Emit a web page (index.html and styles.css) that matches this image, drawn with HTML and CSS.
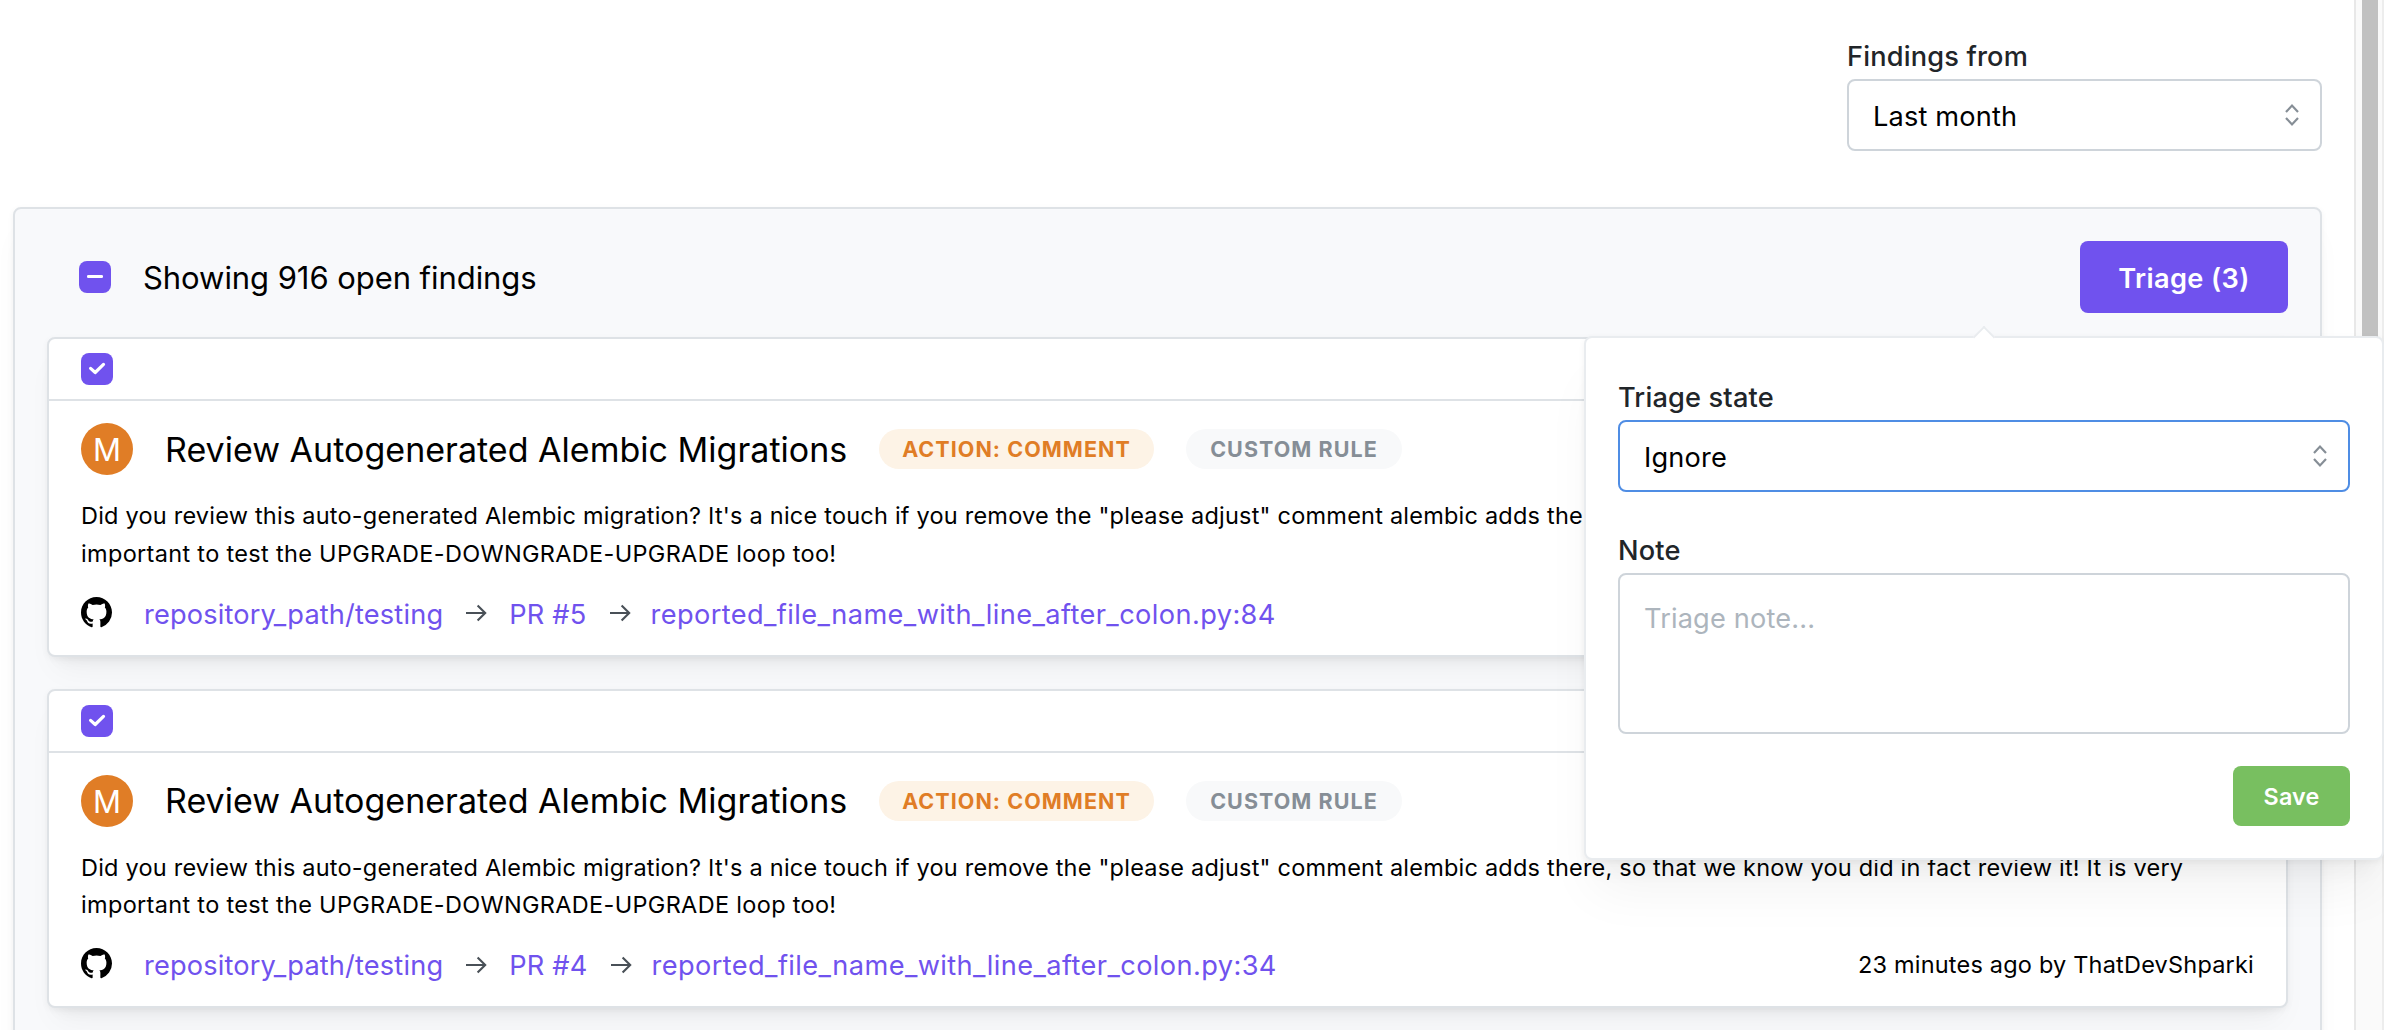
FILE: index.html
```
<!DOCTYPE html>
<html lang="en">
<head>
<meta charset="utf-8">
<title>Findings</title>
<link rel="stylesheet" href="styles.css">
</head>
<body>
<svg class="sprite" width="0" height="0">
  <symbol id="check" viewBox="0 0 32 32"><path d="M9.6 15.4 L14.2 19.5 L22.5 11.4" fill="none" stroke="#fff" stroke-width="3.2" stroke-linecap="round" stroke-linejoin="round"/></symbol>
  <symbol id="minus" viewBox="0 0 32 32"><rect x="8" y="14" width="16" height="3" rx="1.2" fill="#fff"/></symbol>
  <symbol id="arrow" viewBox="0 0 22 18"><path d="M1 9H20M12.6 1.4L20.2 9L12.6 16.6" fill="none" stroke="#495057" stroke-width="2.1"/></symbol>
  <symbol id="chevrons" viewBox="0 0 16 24"><path d="M2 9L8 2.6L14 9M2 15L8 21.4L14 15" fill="none" stroke="#868e96" stroke-width="2.2"/></symbol>
  <symbol id="github" viewBox="0 0 16 16"><path fill-rule="evenodd" d="M8 0C3.58 0 0 3.58 0 8c0 3.54 2.29 6.53 5.47 7.59.4.07.55-.17.55-.38 0-.19-.01-.82-.01-1.49-2.01.37-2.53-.49-2.69-.94-.09-.23-.48-.94-.82-1.13-.28-.15-.68-.52-.01-.53.63-.01 1.08.58 1.23.82.72 1.21 1.87.87 2.33.66.07-.52.28-.87.51-1.07-1.78-.2-3.64-.89-3.64-3.95 0-.87.31-1.59.82-2.15-.08-.2-.36-1.02.08-2.12 0 0 .67-.21 2.2.82.64-.18 1.32-.27 2-.27s1.36.09 2 .27c1.53-1.04 2.2-.82 2.2-.82.44 1.1.16 1.92.08 2.12.51.56.82 1.27.82 2.15 0 3.07-1.87 3.75-3.65 3.95.29.25.54.73.54 1.48 0 1.07-.01 1.93-.01 2.2 0 .21.15.46.55.38A8.01 8.01 0 0 0 16 8c0-4.42-3.58-8-8-8z"/></symbol>
</svg>
<div class="app">
  <main class="page">
    <div class="filters">
      <div class="field">
        <div class="label">Findings from</div>
        <div class="select"><span>Last month</span><svg class="chevrons"><use href="#chevrons"/></svg></div>
      </div>
    </div>
    <section class="panel">
      <header class="panel-head">
        <span class="checkbox"><svg><use href="#minus"/></svg></span>
        <span class="summary">Showing 916 open findings</span>
        <button class="triage">Triage (3)</button>
      </header>
      <article class="card">
        <div class="card-head"><span class="checkbox"><svg><use href="#check"/></svg></span></div>
        <div class="card-body">
          <div class="title-row"><span class="avatar">M</span><h2>Review Autogenerated Alembic Migrations</h2><span class="badge action">ACTION: COMMENT</span><span class="badge custom">CUSTOM RULE</span></div>
          <p class="desc"><span>Did you review this auto-generated Alembic migration? It's a nice touch if you remove the "please adjust" comment alembic adds there, so that we know you did in fact review it! It is very</span> <span class="last">important to test the UPGRADE-DOWNGRADE-UPGRADE loop too!</span></p>
          <div class="links"><svg class="github"><use href="#github"/></svg><a class="repo">repository_path/testing</a><svg class="arrow"><use href="#arrow"/></svg><a class="pr">PR #5</a><svg class="arrow"><use href="#arrow"/></svg><a class="file">reported_file_name_with_line_after_colon.py:84</a></div>
        </div>
      </article>
      <article class="card">
        <div class="card-head"><span class="checkbox"><svg><use href="#check"/></svg></span></div>
        <div class="card-body">
          <div class="title-row"><span class="avatar">M</span><h2>Review Autogenerated Alembic Migrations</h2><span class="badge action">ACTION: COMMENT</span><span class="badge custom">CUSTOM RULE</span></div>
          <p class="desc"><span>Did you review this auto-generated Alembic migration? It's a nice touch if you remove the "please adjust" comment alembic adds there, so that we know you did in fact review it! It is very</span> <span class="last">important to test the UPGRADE-DOWNGRADE-UPGRADE loop too!</span></p>
          <div class="links"><svg class="github"><use href="#github"/></svg><a class="repo">repository_path/testing</a><svg class="arrow"><use href="#arrow"/></svg><a class="pr">PR #4</a><svg class="arrow"><use href="#arrow"/></svg><a class="file">reported_file_name_with_line_after_colon.py:34</a><span class="meta">23 minutes ago by ThatDevShparki</span></div>
        </div>
      </article>
    </section>
  </main>
  <div class="scrollbar"><div class="thumb"></div></div>
</div>
<div class="popover">
  <div class="popover-arrow"></div>
  <div class="label">Triage state</div>
  <div class="select focused"><span>Ignore</span><svg class="chevrons"><use href="#chevrons"/></svg></div>
  <div class="label note-label">Note</div>
  <div class="textarea">Triage note...</div>
  <button class="save">Save</button>
</div>
</body>
</html>
```
FILE: styles.css
```
* { box-sizing: border-box; }
html, body { margin: 0; height: 100%; overflow: hidden; }
body {
  position: relative;
  width: 2384px;
  height: 1030px;
  background: #fff;
  color: #000;
  font-family: Inter, "Liberation Sans", sans-serif;
  letter-spacing: 0.01em;
}
svg { display: block; flex: none; }
.sprite { position: absolute; }
button { border: 0; margin: 0; padding: 0; font-family: inherit; letter-spacing: inherit; color: #fff; border-radius: 8px; }

.app { display: flex; height: 1030px; overflow: hidden; }
.page { flex: 1; padding: 34px 32px 0 13px; overflow: hidden; height: 1030px; }
.filters { display: flex; justify-content: flex-end; margin-bottom: 56px; }
.field { width: 475px; }

.label { height: 45px; line-height: 45.4px; font-size: 27.2px; font-weight: 500; color: #212529; }
.select {
  display: flex;
  align-items: center;
  justify-content: space-between;
  height: 72px;
  padding: 0 20px 0 24px;
  border: 2px solid #ced4da;
  border-radius: 8px;
  background: #fff;
  font-size: 27.2px;
}
.select span { padding-top: 2px; }
.select.focused { border-color: #4f8de4; }
.chevrons { width: 16px; height: 24px; }

.panel {
  display: flex;
  flex-direction: column;
  height: 1200px;
  padding: 32px;
  border: 2px solid #dee2e6;
  border-radius: 8px;
  background: #f8f9fb;
  box-shadow: 0 2px 6px rgba(0,0,0,.05), 0 20px 30px -10px rgba(0,0,0,.05), 0 14px 14px -10px rgba(0,0,0,.04);
}
.panel-head { display: flex; align-items: center; gap: 32px; height: 72px; padding-left: 32px; margin-bottom: 24px; }
.summary { flex: 1; font-size: 31px; letter-spacing: -0.06px; }
.triage { width: 208px; height: 72px; padding-top: 2px; background: #7052ee; font-size: 27.2px; font-weight: 600; letter-spacing: 0.4px; }
.checkbox { flex: none; width: 32px; height: 32px; border-radius: 8px; background: #7052ee; }
.checkbox svg { width: 32px; height: 32px; }

.card {
  flex: none;
  height: 319.6px;
  margin-bottom: 32px;
  border: 2px solid #dee2e6;
  border-radius: 8px;
  background: #fff;
  box-shadow: 0 2px 6px rgba(0,0,0,.05), 0 20px 30px -10px rgba(0,0,0,.05), 0 14px 14px -10px rgba(0,0,0,.04);
}
.card-head { display: flex; align-items: center; height: 62px; padding: 0 32px; border-bottom: 2px solid #dee2e6; }
.card-body { padding: 22px 32px 0; }
.title-row { display: flex; align-items: center; height: 52px; }
.avatar { width: 52px; height: 52px; border-radius: 50%; background: #e07d26; color: #fff; font-size: 31px; line-height: 53px; text-align: center; letter-spacing: 0; }
h2 { margin: 0 30px 0 32px; font-size: 34px; font-weight: 400; letter-spacing: 0.02px; width: 684px; white-space: nowrap; }
.badge { height: 40px; border-radius: 20px; font-size: 21.5px; line-height: 40px; font-weight: 700; letter-spacing: 1.05px; text-align: center; }
.action { width: 275px; background: #fdf3e6; color: #e07d26; margin-right: 32px; }
.custom { width: 216px; background: #f8f9fa; color: #868e96; }
.desc { margin: 22.4px 0 19.8px; font-size: 23.5px; line-height: 37.2px; letter-spacing: 0.217px; }
.desc span { display: block; white-space: nowrap; }
.desc .last { letter-spacing: 0.32px; }
.links { display: flex; align-items: center; gap: 22px; height: 43.4px; font-size: 27.2px; white-space: nowrap; }
.links a { color: #7052ee; padding-top: 1.6px; }
.github { width: 31px; height: 31px; margin: 0 10px 2px 0; }
.arrow { width: 22px; height: 18px; }
.file { margin-left: -2px; letter-spacing: 0.4px; }
.pr { letter-spacing: 0.2px; }
.meta { margin-left: auto; font-size: 23.5px; letter-spacing: 0.2px; }

.scrollbar { width: 30px; border-left: 2px solid #e8e8e8; border-right: 2px solid #ededed; background: #fafafa; padding: 0 4px 0 6px; }
.thumb { height: 700px; background: #c1c1c1; }

.popover {
  position: absolute;
  left: 1584px;
  top: 336px;
  width: 800px;
  height: 524px;
  padding: 37px 32px 32px;
  border: 2px solid #e9ecef;
  border-radius: 8px;
  background: #fff;
  box-shadow: 0 2px 6px rgba(0,0,0,.05), 0 40px 50px -10px rgba(0,0,0,.05), 0 20px 20px -10px rgba(0,0,0,.04);
  display: flex;
  flex-direction: column;
}
.popover-arrow {
  position: absolute;
  left: 390px;
  top: -9px;
  width: 16px;
  height: 16px;
  background: #fff;
  border-top: 2px solid #e9ecef;
  border-left: 2px solid #e9ecef;
  transform: rotate(45deg);
}
.note-label { margin-top: 36px; }
.textarea { height: 161px; margin-bottom: 32px; padding: 22px 24px; border: 2px solid #ced4da; border-radius: 8px; font-size: 27.2px; line-height: 43.4px; letter-spacing: 0.15px; color: #adb5bd; }
.save { align-self: flex-end; width: 117px; height: 60px; background: #78bf60; font-size: 23.3px; font-weight: 600; }
```
